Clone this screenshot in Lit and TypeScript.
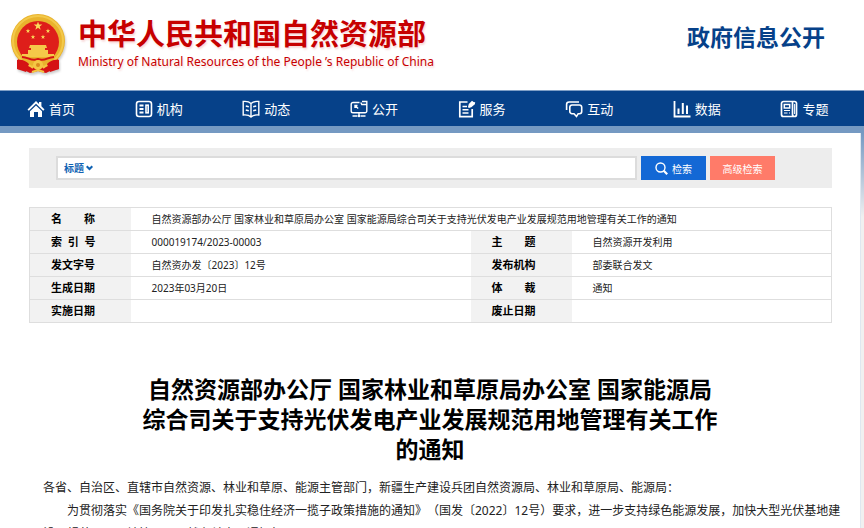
import { LitElement, html, css, svg } from "lit";
import { customElement } from "lit/decorators.js";

const navItems = [
  {
    label: "首页",
    icon: svg`<path fill="#fff" stroke="none" d="M9 1 12 4V2h2.400v4.300L17.500 9.400 16.200 10.700 9 3.700 1.800 10.700.5 9.400Z"/><path fill="#fff" stroke="none" d="M9 5.400 15 11.200V17h-4v-5H7v5H3v-5.800Z"/>`,
  },
  {
    label: "机构",
    icon: svg`<rect x="1.500" y="1.500" width="15" height="15" rx="2.500" stroke-width="1.600"/><path d="M4.500 5.500h4M4.500 9h4M4.500 12.500h4" stroke-width="2"/><rect x="11" y="5.200" width="2.200" height="7.600" stroke-width="1.600"/>`,
  },
  {
    label: "动态",
    icon: svg`<path d="M9 3.500C7 1.500 4 1.200 1.200 1.500V15c3-.3 6 .2 7.800 2 1.800-1.800 4.800-2.300 7.800-2V1.500C14 1.200 11 1.500 9 3.500ZM9 3.500V17M3.800 6l3 .8M3.800 10l3 .8M14.200 6l-3 .8M14.200 10l-3 .8" stroke-width="1.400"/>`,
  },
  {
    label: "公开",
    icon: svg`<path d="M9.500 2.500H3A1.800 1.800 0 0 0 1.200 4.300V11A1.800 1.800 0 0 0 3 12.800h12A1.800 1.800 0 0 0 16.800 11V4.500h-5l-1-2M12 1.500h4.800V4M5 8V5.500h2.500M5.200 5.700l3 2.700M9 13v3M2.500 16h5M10.500 16h5" stroke-width="1.400"/><circle cx="9" cy="16" r="1.200" fill="#fff" stroke="none"/>`,
  },
  {
    label: "服务",
    icon: svg`<path d="M9.500 2H1.800v14.700h12.400V9" stroke-width="1.700"/><path d="M4.500 6.500H9M4.500 9.700h6M4.500 13h6" stroke-width="1.400"/><path fill="#fff" stroke="none" d="m10 7 .8-3L14 .7 15.600 2l1.600.2-.3 2-3.600 3-2.500.7Z"/>`,
  },
  {
    label: "互动",
    icon: svg`<path d="M1.600 10V4.500A2.500 2.500 0 0 1 4.100 2H14" stroke-width="1.600"/><path d="M7 5h7.500A2.200 2.200 0 0 1 16.700 7.200v4.300a2.200 2.200 0 0 1-2.200 2.200h-1.300L11.500 16.500 9 13.700H7a2.200 2.200 0 0 1-2.200-2.200V7.200A2.200 2.200 0 0 1 7 5Z" stroke-width="1.600"/>`,
  },
  {
    label: "数据",
    icon: svg`<path d="M1.500 1v15.500h16"/><path d="M5.500 8.500V14M9.800 3V14M14 5.500V14" stroke-width="2"/>`,
  },
  {
    label: "专题",
    icon: svg`<path d="M12.500 1.500H3.500A2 2 0 0 0 1.500 3.500V14.500a2 2 0 0 0 2 2h11a2 2 0 0 0 2-2V4a2 2 0 0 0-2-2.500h-2V14.500a2 2 0 0 0 2 2" stroke-width="1.700"/><path d="M14.600 4v10" stroke-width="1"/><rect x="4.300" y="4.500" width="5.400" height="3.500" stroke-width="1.500"/><path d="M4 10.500h6M4 13h3.500M9 13h1" stroke-width="1.200"/>`,
  },
];

const records = [
  ["索\u00a0\u00a0引\u00a0\u00a0号", "000019174/2023-00003", "主　　题", "自然资源开发利用"],
  ["发文字号", "自然资办发〔2023〕12号", "发布机构", "部委联合发文"],
  ["生成日期", "2023年03月20日", "体　　裁", "通知"],
  ["实施日期", "", "废止日期", ""],
];

const star = (x: number, y: number, r: number) => {
  const points = Array.from({ length: 10 }, (_, i) => {
    const radius = i % 2 ? r * 0.4 : r;
    const angle = (i * Math.PI) / 5 - Math.PI / 2;
    return `${(x + radius * Math.cos(angle)).toFixed(2)},${(y + radius * Math.sin(angle)).toFixed(2)}`;
  });
  return svg`<polygon fill="#fbdc5c" points=${points.join(" ")}/>`;
};

@customElement("site-header")
export class SiteHeader extends LitElement {
  static styles = css`
    .bar {
      display: flex;
      align-items: center;
      justify-content: space-between;
      height: 90px;
      padding: 0 39px 0 10px;
      box-sizing: border-box;
    }
    .brand {
      display: flex;
      align-items: center;
      gap: 12px;
      text-decoration: none;
      color: #c70000;
      padding-bottom: 2px;
    }
    .emblem {
      display: block;
      width: 56px;
      height: 60px;
      filter: drop-shadow(1px 2px 1px #0003);
    }
    .names {
      display: flex;
      flex-direction: column;
      white-space: nowrap;
      text-shadow: 1px 2px 2px #d0000026;
    }
    .cn {
      font-size: 29px;
      line-height: 36px;
      font-weight: 700;
    }
    .en {
      font-size: 12px;
      line-height: 20px;
    }
    .section {
      margin: 0;
      padding-bottom: 16px;
      color: #064189;
      font-size: 23px;
      line-height: 30px;
      font-weight: 700;
      white-space: nowrap;
    }
  `;

  render() {
    return html`
      <header class="bar">
        <a class="brand" href="#">
          <svg class="emblem" viewBox="0 0 56 60" aria-hidden="true">
            <path fill="#d51214" d="M8 44 18 50 28 55 38 50 48 44 49 55 42 56 36 59 28 57 20 59 14 56 7 55Z" />
            <circle cx="28" cy="27" r="27" fill="#e9b32d" />
            <circle cx="28" cy="27" r="25" fill="none" stroke="#f3c94a" stroke-width="2" />
            <circle cx="28" cy="28" r="21" fill="#de1e1a" />
            ${star(28, 12, 4.5)} ${star(18, 17, 2.4)} ${star(23, 23, 2.4)} ${star(33, 23, 2.4)} ${star(38, 17, 2.4)}
            <path fill="#f5c949" d="M20 31h16l1 3H19ZM21 34h14v2h3v4H18v-4h3ZM12 40h32v3H12Z" />
            <path fill="#e9b32d" d="M11 43h34l-3 6-7 3-7-2-7 2-7-3Z" />
            <path fill="none" stroke="#d51214" stroke-width="2" d="M12 43c7 0 9 5 16 2 7 3 9-2 16-2" />
            <path fill="#d51214" d="M7 46c5-1 9 1 12 4l-3 8-9-3ZM49 46c-5-1-9 1-12 4l3 8 9-3Z" />
            <circle cx="28" cy="51" r="5" fill="#f4c643" />
            <circle cx="28" cy="51" r="2" fill="#d98a1e" />
            <path fill="none" stroke="#f4c643" stroke-width="2" d="m19 51 4 3M37 51l-4 3M22 58l6-2 6 2" />
          </svg>
          <span class="names">
            <span class="cn">中华人民共和国自然资源部</span>
            <span class="en" lang="en">Ministry of Natural Resources of the People ’s Republic of China</span>
          </span>
        </a>
        <p class="section">政府信息公开</p>
      </header>
    `;
  }
}

@customElement("site-nav")
export class SiteNav extends LitElement {
  static styles = css`
    .nav {
      border-top: 1px solid #7f9fc6;
      border-bottom: 7px solid #7599c2;
      background: #064189;
    }
    .list {
      display: grid;
      grid-template-columns: repeat(8, 1fr);
      margin: 0 3px 0 0;
      padding: 0;
      list-style: none;
    }
    .link {
      display: flex;
      align-items: center;
      gap: 4px;
      height: 35px;
      padding-left: 27px;
      color: #fff;
      font-size: 13px;
      text-decoration: none;
      white-space: nowrap;
    }
    .icon {
      width: 18px;
      height: 18px;
      fill: none;
      stroke: #fff;
      stroke-width: 1.8;
    }
  `;

  render() {
    return html`
      <nav class="nav">
        <ul class="list">
          ${navItems.map(
            (item) => html`<li>
              <a class="link" href="#"><svg class="icon" viewBox="0 0 18 18" aria-hidden="true">${item.icon}</svg>${item.label}</a>
            </li>`
          )}
        </ul>
      </nav>
    `;
  }
}

@customElement("search-bar")
export class SearchBar extends LitElement {
  static styles = css`
    .form {
      display: flex;
      gap: 4px;
      padding: 8px 57px 8px 27px;
      background: #ededed;
    }
    .box {
      display: flex;
      flex: 1;
      min-width: 0;
      border: 2px solid #dcdcdc;
      background: #fff;
    }
    .picker {
      display: flex;
      align-items: center;
      color: #1063b3;
      padding-left: 6px;
    }
    .field {
      appearance: none;
      width: 22px;
      margin: 0;
      padding: 0;
      border: 0;
      background: none;
      color: inherit;
      font: 700 10px/20px "Noto Sans", "Noto Sans CJK SC", sans-serif;
    }
    .chevron {
      width: 7px;
      height: 6px;
      fill: none;
      stroke: currentColor;
      stroke-width: 2;
    }
    .query {
      flex: 1;
      min-width: 0;
      padding: 0 6px;
      border: 0;
      outline: 0;
      background: none;
      font: inherit;
      font-size: 10px;
    }
    .button {
      display: flex;
      align-items: center;
      justify-content: center;
      gap: 4px;
      width: 65px;
      height: 24px;
      padding: 0;
      border: 0;
      color: #fff;
      font: inherit;
      font-size: 10px;
    }
    .primary {
      background: #1368d5;
    }
    .advanced {
      background: #ff7b69;
    }
    .lens {
      width: 13px;
      height: 13px;
      fill: none;
      stroke: #fff;
    }
  `;

  render() {
    return html`
      <form class="form" role="search">
        <div class="box">
          <div class="picker">
            <select class="field" aria-label="检索字段">
              <option>标题</option>
            </select>
            <svg class="chevron" viewBox="0 0 7 6" aria-hidden="true"><path d="m.7 1.200 2.800 2.800 2.800-2.800" /></svg>
          </div>
          <input class="query" type="text" aria-label="检索词" />
        </div>
        <button class="button primary" type="button">
          <svg class="lens" viewBox="0 0 13 13" aria-hidden="true">
            <circle cx="5.500" cy="5.500" r="4.500" stroke-width="1.400" />
            <path d="m8.700 8.700 3.500 3.500" stroke-width="2.200" />
          </svg>
          检索
        </button>
        <button class="button advanced" type="button">高级检索</button>
      </form>
    `;
  }
}

@customElement("record-table")
export class RecordTable extends LitElement {
  static styles = css`
    .table {
      width: 100%;
      border-collapse: collapse;
      table-layout: fixed;
      border: 1px solid #dedede;
      color: #222;
      font-size: 10px;
      line-height: 22px;
    }
    .label-col {
      width: 101px;
    }
    .value-col {
      width: 340px;
    }
    .row {
      height: 23px;
      border-bottom: 1px solid #dedede;
    }
    .label,
    .value {
      height: 22px;
      padding: 0 0 0 21px;
      text-align: left;
      white-space: nowrap;
    }
    .label {
      background: #f2f2f2;
      color: #000;
      font-size: 11px;
      font-weight: 700;
    }
  `;

  render() {
    return html`
      <table class="table">
        <colgroup>
          <col class="label-col" />
          <col class="value-col" />
          <col class="label-col" />
          <col />
        </colgroup>
        <tbody>
          <tr class="row">
            <th class="label" scope="row">名　　称</th>
            <td class="value" colspan="3">
              自然资源部办公厅 国家林业和草原局办公室 国家能源局综合司关于支持光伏发电产业发展规范用地管理有关工作的通知
            </td>
          </tr>
          ${records.map(
            ([a, b, c, d]) => html`<tr class="row">
              <th class="label" scope="row">${a}</th>
              <td class="value">${b}</td>
              <th class="label" scope="row">${c}</th>
              <td class="value">${d}</td>
            </tr>`
          )}
        </tbody>
      </table>
    `;
  }
}

@customElement("app-root")
export class AppRoot extends LitElement {
  static styles = css`
    :host {
      display: flex;
      flex-direction: column;
      height: 100vh;
      overflow: hidden;
      background: #fff;
      color: #222;
      font-family: "Noto Sans", "Noto Sans CJK SC", sans-serif;
    }
    .backdrop {
      flex: 1;
      min-height: 0;
      padding-right: 3px;
      background: linear-gradient(#7599c2, #f0f0f0 84px);
    }
    .paper {
      display: flow-root;
      min-height: 100%;
      background: #fff;
      border-right: 1px solid #dfe7f0;
    }
    .panel {
      display: flex;
      flex-direction: column;
      gap: 19px;
      padding: 15px 28px 0 29px;
    }
    .title {
      max-width: 580px;
      margin: 51px auto 12px;
      color: #000;
      font-size: 23px;
      line-height: 30px;
      font-weight: 700;
      text-align: center;
    }
    .body {
      padding: 0 16px 0 43px;
      font-size: 12px;
      line-height: 23px;
      text-spacing-trim: space-all;
    }
    .text {
      margin: 0;
    }
    .indent {
      text-indent: 2em;
    }
  `;

  render() {
    return html`
      <site-header></site-header>
      <site-nav></site-nav>
      <div class="backdrop">
        <main class="paper">
          <div class="panel">
            <search-bar></search-bar>
            <record-table></record-table>
          </div>
          <h1 class="title">
            自然资源部办公厅 国家林业和草原局办公室 国家能源局综合司关于支持光伏发电产业发展规范用地管理有关工作的通知
          </h1>
          <div class="body">
            <p class="text">
              各省、自治区、直辖市自然资源、林业和草原、能源主管部门，新疆生产建设兵团自然资源局、林业和草原局、能源局：
            </p>
            <p class="text indent">
              为贯彻落实《国务院关于印发扎实稳住经济一揽子政策措施的通知》（国发〔2022〕12号）要求，进一步支持绿色能源发展，加快大型光伏基地建设，规范项目用地管理，现就有关事项通知如下：
            </p>
          </div>
        </main>
      </div>
    `;
  }
}
